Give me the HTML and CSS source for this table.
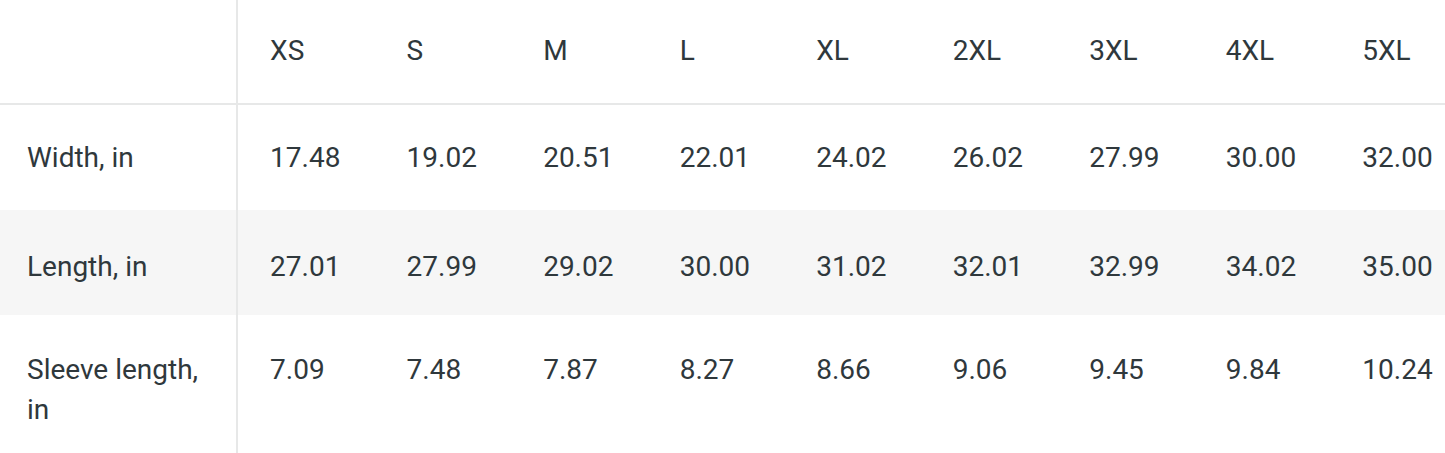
FILE: index.html
```html
<!DOCTYPE html>
<html lang="en">
<head>
<meta charset="utf-8">
<title>Size chart</title>
<link rel="stylesheet" href="styles.css">
</head>
<body>
<div class="chart">
  <table class="size-table">
    <colgroup>
      <col class="col-label">
      <col class="col-size"><col class="col-size"><col class="col-size">
      <col class="col-size"><col class="col-size"><col class="col-size">
      <col class="col-size"><col class="col-size"><col class="col-size">
    </colgroup>
    <thead>
      <tr>
        <th class="label"></th>
        <th>XS</th><th>S</th><th>M</th><th>L</th><th>XL</th><th>2XL</th><th>3XL</th><th>4XL</th><th>5XL</th>
      </tr>
    </thead>
    <tbody>
      <tr>
        <td class="label">Width, in</td>
        <td>17.48</td><td>19.02</td><td>20.51</td><td>22.01</td><td>24.02</td><td>26.02</td><td>27.99</td><td>30.00</td><td>32.00</td>
      </tr>
      <tr class="alt">
        <td class="label">Length, in</td>
        <td>27.01</td><td>27.99</td><td>29.02</td><td>30.00</td><td>31.02</td><td>32.01</td><td>32.99</td><td>34.02</td><td>35.00</td>
      </tr>
      <tr class="last">
        <td class="label">Sleeve length, in</td>
        <td>7.09</td><td>7.48</td><td>7.87</td><td>8.27</td><td>8.66</td><td>9.06</td><td>9.45</td><td>9.84</td><td>10.24</td>
      </tr>
    </tbody>
  </table>
</div>
</body>
</html>
```
FILE: styles.css
```css
html, body {
  margin: 0;
  padding: 0;
  background: #ffffff;
  overflow: hidden;
}

.chart {
  width: 1445px;
  overflow: hidden;
}

.size-table {
  table-layout: fixed;
  width: 1467px;
  border-collapse: separate;
  border-spacing: 0;
  font-family: Roboto, "Liberation Sans", Arial, sans-serif;
  font-size: 28px;
  line-height: 40px;
  color: #2f383c;
}

.col-label {
  width: 238px;
}

.col-size {
  width: 136.5px;
}

.size-table th,
.size-table td {
  text-align: left;
  vertical-align: top;
  padding: 33px 0 32px 32px;
  font-weight: 400;
  white-space: nowrap;
}

.size-table th {
  padding-top: 31px;
  padding-bottom: 32px;
  border-bottom: 2px solid #e7e8e8;
}

.size-table .label {
  padding-left: 27px;
  padding-right: 20px;
  border-right: 2px solid #e7e8e8;
  white-space: normal;
}

.size-table .alt td {
  background: #f6f6f6;
  padding-top: 37px;
  padding-bottom: 28px;
}

.size-table .last td {
  padding-top: 35px;
}
```
